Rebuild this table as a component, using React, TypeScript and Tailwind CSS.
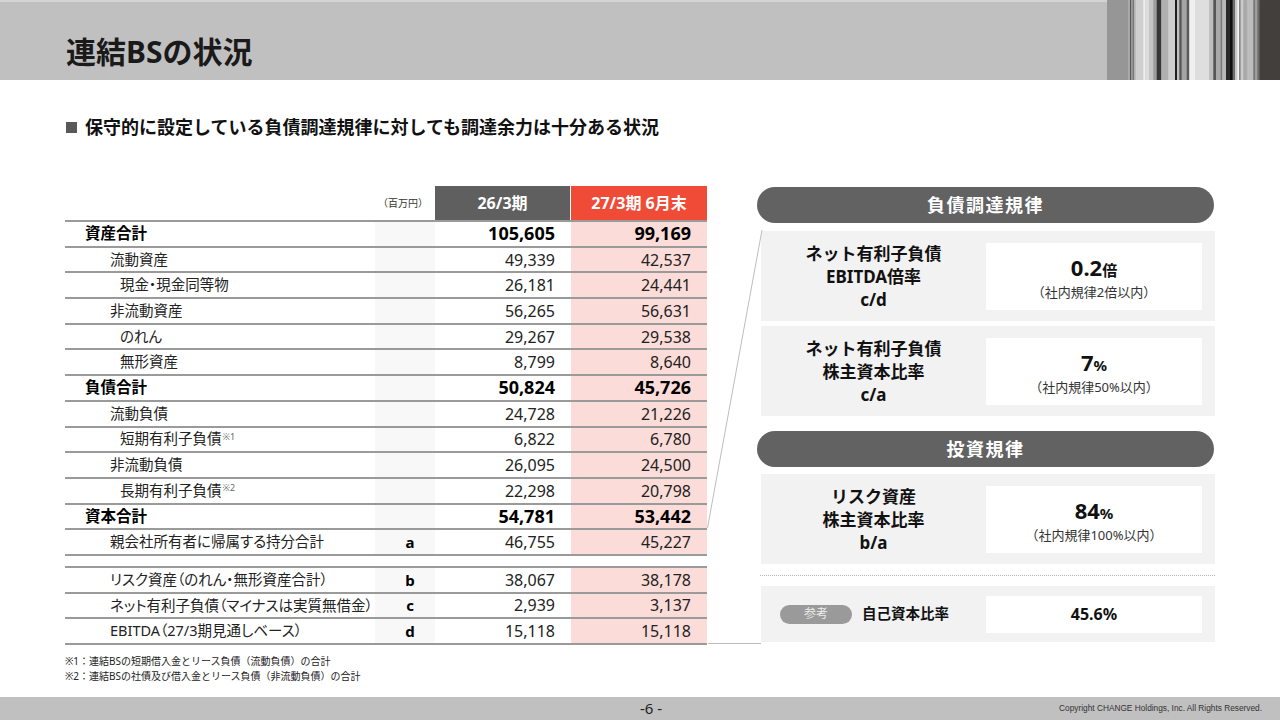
const rows1 = [
  { label: '資産合計', v1: '105,605', v2: '99,169', level: 0 },
  { label: '流動資産', v1: '49,339', v2: '42,537', level: 1 },
  { label: '現金・現金同等物', v1: '26,181', v2: '24,441', level: 2 },
  { label: '非流動資産', v1: '56,265', v2: '56,631', level: 1 },
  { label: 'のれん', v1: '29,267', v2: '29,538', level: 2 },
  { label: '無形資産', v1: '8,799', v2: '8,640', level: 2 },
  { label: '負債合計', v1: '50,824', v2: '45,726', level: 0 },
  { label: '流動負債', v1: '24,728', v2: '21,226', level: 1 },
  { label: '短期有利子負債', note: '※1', v1: '6,822', v2: '6,780', level: 2 },
  { label: '非流動負債', v1: '26,095', v2: '24,500', level: 1 },
  { label: '長期有利子負債', note: '※2', v1: '22,298', v2: '20,798', level: 2 },
  { label: '資本合計', v1: '54,781', v2: '53,442', level: 0 },
  { label: '親会社所有者に帰属する持分合計', mark: 'a', v1: '46,755', v2: '45,227', level: 1 },
];

const rows2 = [
  { label: 'リスク資産（のれん・無形資産合計）', mark: 'b', v1: '38,067', v2: '38,178', level: 1 },
  { label: 'ネット有利子負債（マイナスは実質無借金）', mark: 'c', v1: '2,939', v2: '3,137', level: 1 },
  { label: 'EBITDA（27/3期見通しベース）', mark: 'd', v1: '15,118', v2: '15,118', level: 1 },
];

// header barcode stripes: [x, width, colour]
const stripes: [number, number, string][] = [
  [0, 21.3, '#969696'],
  [21.3, 1.7, '#a8a8a8'],
  [23, 1, '#555555'],
  [24, 1.7, '#9a9a9a'],
  [25.7, 1.6, '#777777'],
  [27.3, 1.7, '#bdbdbd'],
  [29, 7.3, '#cfcfcf'],
  [36.3, 2, '#efefef'],
  [38.3, 3.7, '#dcdcdc'],
  [42, 4.3, '#c5c5c5'],
  [46.3, 3.4, '#9d9d9d'],
  [49.7, 4.6, '#363636'],
  [54.3, 7, '#b0b0b0'],
  [61.3, 6.7, '#cdcdcd'],
  [68, 2, '#1e1e1e'],
  [70, 2.3, '#bfbfbf'],
  [72.3, 2.4, '#555555'],
  [74.7, 5, '#a5a5a5'],
  [79.7, 2.6, '#5a5a5a'],
  [82.3, 5.7, '#f0f0f0'],
  [88, 14.3, '#dedede'],
  [102.3, 4, '#bdbdbd'],
  [106.3, 2.7, '#555555'],
  [109, 4.7, '#a8a8a8'],
  [113.7, 1.6, '#7a7a7a'],
  [115.3, 3.7, '#bababa'],
  [119, 3.3, '#2a2a2a'],
  [122.3, 3.4, '#0d0d0d'],
  [125.7, 2.3, '#6b6b6b'],
  [128, 2.3, '#c8c8c8'],
  [130.3, 1.7, '#f2f2f2'],
  [132, 1.7, '#8a8a8a'],
  [133.7, 2.6, '#cbcbcb'],
  [136.3, 4, '#a9a9a9'],
  [140.3, 6, '#bdbdbd'],
  [146.3, 2, '#767676'],
  [148.3, 2, '#9f9f9f'],
  [150.3, 2, '#6a6a6a'],
  [152.3, 20.7, '#433f3d'],
];

type Row = { label: string; note?: string; mark?: string; v1: string; v2: string; level: number };

function TableRow({ row }: { row: Row }) {
  const bold = row.level === 0;
  const pad = row.level === 0 ? 'pl-[20px]' : row.level === 1 ? 'pl-[45px]' : 'pl-[55px]';
  return (
    <div className="flex h-[25.7px] border-t-2 border-[#9a9a9a]">
      <div className={`flex w-[310px] items-center ${pad}`}>
        <span
          className={`whitespace-nowrap [font-feature-settings:'palt'] ${
            bold ? 'text-[15.5px] font-bold text-black' : 'text-[14.5px] text-[#222]'
          }`}
        >
          {row.label}
          {row.note && <sup className="ml-px text-[9px] text-[#666]">{row.note}</sup>}
        </span>
      </div>
      <div className="flex w-[60px] items-center justify-center bg-[#f8f8f8] pl-[10px] text-[15px] font-bold text-black">
        {row.mark}
      </div>
      <div
        className={`flex w-[135px] items-center justify-end pr-[15px] ${
          bold ? 'text-[18px] font-bold text-black' : 'text-[16px] text-[#222]'
        }`}
      >
        {row.v1}
      </div>
      <div
        className={`ml-px flex w-[136px] items-center justify-end bg-[#fcdcd8] pr-[16px] ${
          bold ? 'text-[18px] font-bold text-black' : 'text-[16px] text-[#222]'
        }`}
      >
        {row.v2}
      </div>
    </div>
  );
}

function Pill({ children }: { children: React.ReactNode }) {
  return (
    <div className="flex h-[36px] w-[457px] items-center justify-center rounded-full bg-[#626262] text-[18px] font-bold tracking-[1.5px] text-white">
      {children}
    </div>
  );
}

function RuleCard({ lines, big, unit, sub }: { lines: string[]; big: string; unit: string; sub: string }) {
  return (
    <div className="ml-[4px] flex h-[90px] w-[454px] items-center bg-[#f2f2f2]">
      <div className="flex w-[225px] flex-col items-center text-[17px] font-bold leading-[23px] text-[#111]">
        {lines.map((l) => (
          <div key={l}>{l}</div>
        ))}
      </div>
      <div className="flex h-[67px] w-[216px] flex-col items-center justify-center bg-white pt-[2px]">
        <div className="leading-[26px] text-[#111]">
          <span className="text-[22px] font-bold">{big}</span>
          <span className="text-[15px] font-bold">{unit}</span>
        </div>
        <div className="text-[13px] leading-[18px] text-[#333]">{sub}</div>
      </div>
    </div>
  );
}

export default function App() {
  return (
    <div className="relative flex h-[720px] w-[1280px] flex-col overflow-hidden bg-white font-['Noto_Sans','Noto_Sans_CJK_JP',sans-serif] text-[#222]">
      {/* title band */}
      <div className="flex h-[80px] shrink-0 items-start border-t-2 border-[#d4d4d4] bg-[#c0c0c0]">
        <h1 className="mt-[31px] pl-[66px] text-[30px] font-bold leading-[38px] text-[#1a1a1a]">連結BSの状況</h1>
        <svg className="ml-auto -mt-[2px]" width="173" height="80" viewBox="0 0 173 80" preserveAspectRatio="none">
          {stripes.map(([x, w, c], i) => (
            <rect key={i} x={x} y={0} width={w + 0.2} height={80} fill={c} />
          ))}
        </svg>
      </div>

      <div className="mt-[35px] flex items-center pl-[66px] leading-[24px]">
        <span className="mr-[8px] inline-block h-[11px] w-[11px] bg-[#595959]" />
        <span className="text-[18px] font-bold text-[#111]">
          保守的に設定している負債調達規律に対しても調達余力は十分ある状況
        </span>
      </div>

      <div className="mt-[47px] flex pl-[65px]">
        {/* table */}
        <div className="w-[642px]">
          <div className="flex h-[34px]">
            <div className="flex w-[370px] items-center justify-end pr-[7px] text-[10px] text-[#333]">（百万円）</div>
            <div className="flex w-[135px] items-center justify-center bg-[#5f5f5f] text-[16px] font-bold text-white">
              26/3期
            </div>
            <div className="ml-px flex w-[136px] items-center justify-center bg-[#f04b37] text-[16px] font-bold text-white">
              27/3期 6月末
            </div>
          </div>
          <div className="border-b-2 border-[#9a9a9a]">
            {rows1.map((r) => (
              <TableRow key={r.label} row={r} />
            ))}
          </div>
          <div className="mt-[10px] border-b-2 border-[#9a9a9a]">
            {rows2.map((r) => (
              <TableRow key={r.label} row={r} />
            ))}
          </div>
          <div className="mt-[9px] text-[10px] leading-[15px] text-[#222]">
            <div>※1：連結BSの短期借入金とリース負債（流動負債）の合計</div>
            <div>※2：連結BSの社債及び借入金とリース負債（非流動負債）の合計</div>
          </div>
        </div>

        {/* rules panel */}
        <div className="ml-[50px] w-[458px] pt-px">
          <Pill>負債調達規律</Pill>
          <div className="mt-[8px]">
            <RuleCard lines={['ネット有利子負債', 'EBITDA倍率', 'c/d']} big="0.2" unit="倍" sub="（社内規律2倍以内）" />
          </div>
          <div className="mt-[5px]">
            <RuleCard lines={['ネット有利子負債', '株主資本比率', 'c/a']} big="7" unit="%" sub="（社内規律50%以内）" />
          </div>
          <div className="mt-[15px]">
            <Pill>投資規律</Pill>
          </div>
          <div className="mt-[7px]">
            <RuleCard lines={['リスク資産', '株主資本比率', 'b/a']} big="84" unit="%" sub="（社内規律100%以内）" />
          </div>
          <div className="ml-[3px] mt-[11px] w-[455px] border-t border-dotted border-[#b5b5b5]" />
          <div className="ml-[4px] mt-[10px] flex h-[56px] w-[454px] items-center bg-[#f2f2f2]">
            <div className="ml-[19px] flex h-[19px] w-[72px] items-center justify-center rounded-full bg-[#9a9a9a] text-[12px] text-[#ececec]">
              参考
            </div>
            <div className="ml-[10px] w-[124px] text-[14.5px] font-bold text-[#111]">自己資本比率</div>
            <div className="flex h-[37px] w-[216px] items-center justify-center bg-white text-[16px] font-bold text-[#111]">
              45.6%
            </div>
          </div>
        </div>
      </div>

      {/* footer */}
      <div className="relative mt-auto flex h-[23px] shrink-0 items-center bg-[#c0c0c0]">
        <div className="absolute left-[640px] text-[15px] leading-[23px] text-[#222]">-6 -</div>
        <div className="ml-auto pr-[18px] font-['Liberation_Sans',sans-serif] text-[8.3px] text-[#333]">
          Copyright CHANGE Holdings, Inc. All Rights Reserved.
        </div>
      </div>

      {/* connector lines between table and panel */}
      <svg className="pointer-events-none absolute left-0 top-0" width="1280" height="720">
        <line x1="762" y1="230" x2="707.5" y2="528" stroke="#bdbdbd" strokeWidth="1" />
        <line x1="708" y1="643.5" x2="761" y2="643.5" stroke="#bdbdbd" strokeWidth="1" />
      </svg>
    </div>
  );
}
